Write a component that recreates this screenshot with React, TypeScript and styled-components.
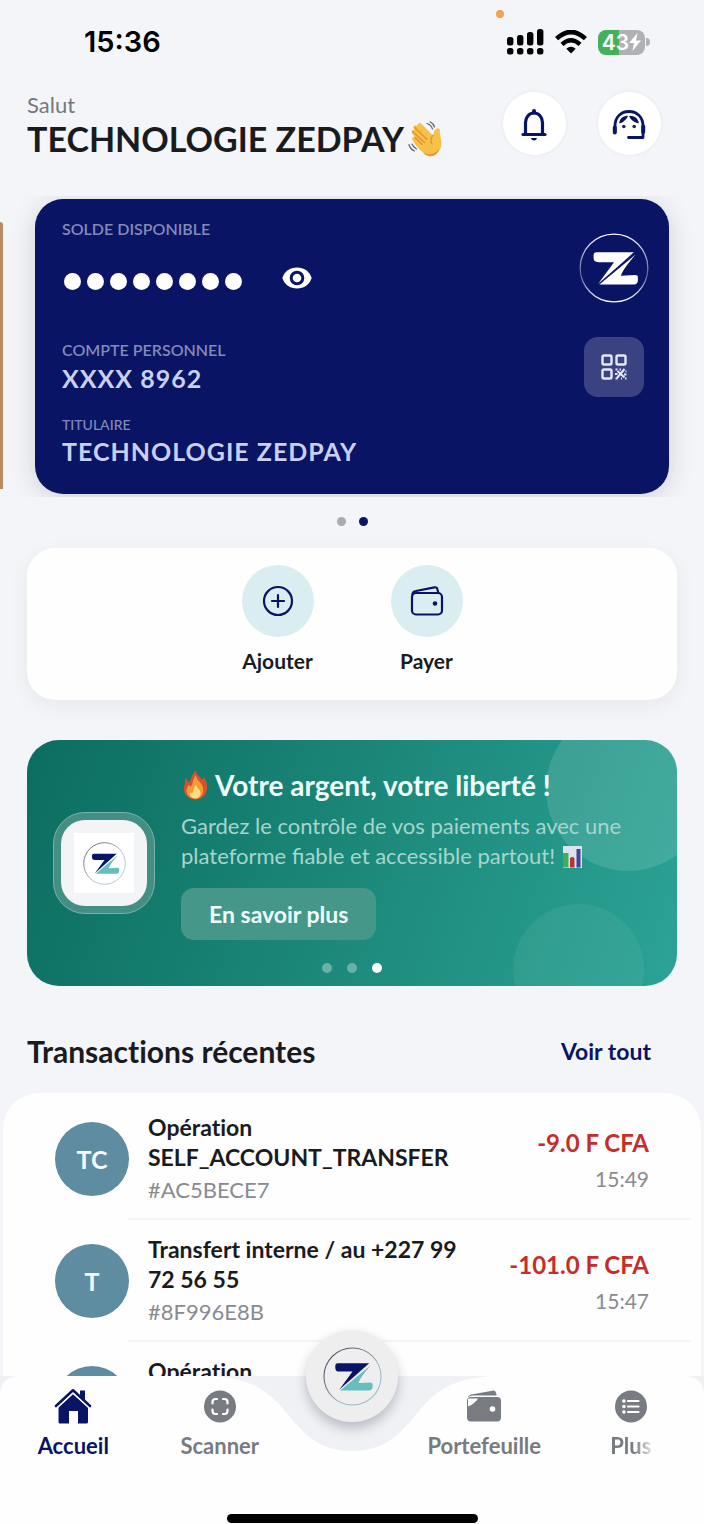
import React from "react";
import styled, { createGlobalStyle, css } from "styled-components";

const navy = "#0a1464";
const ink = "#191b1f";
const grey = "#787b82";

const GlobalStyle = createGlobalStyle`
  *, *::before, *::after { box-sizing: border-box; }
  html, body { margin: 0; padding: 0; }
  body {
    background: #f4f5f8;
    color: ${ink};
    font-family: Lato, "Liberation Sans", sans-serif;
    font-size: 22px;
  }
  button { font: inherit; color: inherit; border: 0; padding: 0; background: none; cursor: pointer; }
  a { color: inherit; text-decoration: none; }
  h1, h2, h3, p, ul { margin: 0; padding: 0; }
  h2, h3 { font-variant-ligatures: none; }
  svg { display: block; }
`;

const Screen = styled.div`
  display: flex;
  flex-direction: column;
  height: 100vh;
  overflow: hidden;
`;

const Main = styled.main`
  flex: 1;
  min-height: 0;
  overflow: hidden;
`;

/* ---------- status bar ---------- */

const StatusBar = styled.div`
  position: relative;
  display: flex;
  justify-content: space-between;
  align-items: center;
  height: 84px;
  padding: 0 54px 0 84px;
`;

const Clock = styled.time`
  font-family: Inter, "Liberation Sans", sans-serif;
  font-size: 29px;
  font-weight: 600;
  line-height: 36px;
  color: #000;
`;

const StatusIcons = styled.div`
  display: flex;
  align-items: center;
  gap: 11px;
`;

const MicDot = styled.span`
  position: absolute;
  top: 10px;
  right: 200px;
  width: 8px;
  height: 8px;
  border-radius: 50%;
  background: #f3a24f;
`;

const Battery = styled.div`
  display: flex;
  align-items: center;
  gap: 1px;
`;

const BatteryBody = styled.div`
  display: flex;
  align-items: center;
  justify-content: center;
  width: 47px;
  height: 25px;
  border-radius: 8px;
  background: linear-gradient(90deg, #43b05c 45%, #b0b1b4 45%);
  color: #fff;
  font-family: Inter, "Liberation Sans", sans-serif;
  font-size: 21px;
  font-weight: 600;
  line-height: 25px;
`;

const BatteryTip = styled.span`
  width: 4px;
  height: 8px;
  border-radius: 0 4px 4px 0;
  background: #b0b1b4;
`;

/* ---------- header ---------- */

const Header = styled.header`
  display: flex;
  justify-content: space-between;
  align-items: flex-start;
  padding: 8px 43px 37px 27px;
`;

const Greeting = styled.p`
  font-size: 22px;
  line-height: 26px;
  color: #74777d;
`;

const UserName = styled.h1`
  display: flex;
  align-items: center;
  gap: 4px;
  font-size: 34px;
  font-weight: 700;
  line-height: 41px;
  white-space: nowrap;
`;

const HeaderActions = styled.div`
  display: flex;
  gap: 32px;
`;

const RoundButton = styled.button`
  display: grid;
  place-items: center;
  width: 63px;
  height: 63px;
  padding: 2px 2px 0 0;
  border-radius: 50%;
  background: #fff;
  color: ${navy};
  box-shadow: 0 0 4px rgba(20, 30, 60, 0.06);
`;

/* ---------- account carousel ---------- */

const Carousel = styled.section`
  display: flex;
  gap: 32px;
  padding: 3px 35px 3px 0;
  overflow: hidden;
`;

const PreviousCard = styled.div`
  flex: none;
  width: 3px;
  margin: 23px 0 5px;
  border-radius: 0 3px 0 0;
  background: #b98a63;
`;

const AccountCard = styled.article`
  flex: 1;
  display: flex;
  justify-content: space-between;
  padding: 19px 20px 25px 27px;
  border-radius: 28px;
  background: ${navy};
  box-shadow: 0 4px 26px rgba(20, 30, 60, 0.16);
`;

const CardLabel = styled.p<{ $small?: boolean }>`
  font-size: ${(p) => (p.$small ? 14 : 16)}px;
  font-weight: ${(p) => (p.$small ? 500 : 600)};
  line-height: ${(p) => (p.$small ? 18 : 22)}px;
  color: #838ab8;
`;

const CardValue = styled.p`
  font-size: 25px;
  font-weight: 700;
  line-height: 35px;
  letter-spacing: 1px;
  color: #c9d0f2;
`;

const BalanceRow = styled.div`
  display: flex;
  align-items: center;
  gap: 40px;
  height: 36px;
  margin: 20px 0 43px;
  padding-left: 2px;
`;

const MaskedBalance = styled.div`
  display: flex;
  gap: 6px;
  padding-top: 6px;
`;

const MaskDot = styled.span`
  width: 17px;
  height: 17px;
  border-radius: 50%;
  background: #fff;
`;

const IconButton = styled.button`
  color: #fff;
`;

const Holder = styled.div`
  margin-top: 20px;
`;

const CardSide = styled.div`
  display: flex;
  flex-direction: column;
  align-items: center;
  gap: 34px;
  padding-top: 15px;
`;

const QrButton = styled.button`
  display: grid;
  place-items: center;
  width: 60px;
  height: 60px;
  border-radius: 14px;
  background: #3a4281;
  color: #e3e8fb;
`;

const Pager = styled.div<{ $overlay?: boolean }>`
  display: flex;
  justify-content: center;
  gap: ${(p) => (p.$overlay ? 15 : 13)}px;
  ${(p) =>
    p.$overlay
      ? css`
          position: absolute;
          left: 0;
          right: 0;
          bottom: 13px;
        `
      : css`
          padding: 20px 0 22px;
        `}
`;

const PagerDot = styled.span<{ $color: string; $size: number }>`
  width: ${(p) => p.$size}px;
  height: ${(p) => p.$size}px;
  border-radius: 50%;
  background: ${(p) => p.$color};
`;

/* ---------- quick actions ---------- */

const QuickActions = styled.section`
  display: flex;
  justify-content: center;
  gap: 77px;
  margin: 0 27px;
  padding: 17px 0 26px;
  border-radius: 28px;
  background: #fefefe;
  box-shadow: 0 6px 20px rgba(20, 30, 60, 0.06);
`;

const QuickAction = styled.button`
  display: flex;
  flex-direction: column;
  align-items: center;
  gap: 11px;
  width: 72px;
  font-size: 21px;
  font-weight: 700;
  line-height: 26px;
`;

const ActionCircle = styled.span`
  display: grid;
  place-items: center;
  width: 72px;
  height: 72px;
  border-radius: 50%;
  background: #daedf1;
  color: ${navy};
`;

/* ---------- promo banner ---------- */

const Banner = styled.section`
  position: relative;
  display: flex;
  align-items: center;
  gap: 26px;
  margin: 40px 27px 0;
  padding-left: 26px;
  border-radius: 32px;
  overflow: hidden;
  background: linear-gradient(110deg, #0b6d5f 0%, #1a8577 45%, #2ba396 100%);
`;

const Bubble = styled.span<{ $size: number; $x: number; $y: number; $alpha: number }>`
  position: absolute;
  right: ${(p) => p.$x}px;
  top: ${(p) => p.$y}px;
  width: ${(p) => p.$size}px;
  height: ${(p) => p.$size}px;
  border-radius: 50%;
  background: rgba(255, 255, 255, ${(p) => p.$alpha});
`;

const LogoFrame = styled.div`
  flex: none;
  padding: 7px;
  border: 1px solid #7ab3a9;
  border-radius: 32px;
  background: #448f83;
`;

const LogoTile = styled.div`
  display: grid;
  place-items: center;
  width: 86px;
  height: 86px;
  border-radius: 24px;
  background: #f2f4f6;
`;

const LogoPaper = styled.div`
  display: grid;
  place-items: center;
  width: 60px;
  height: 60px;
  background: #fff;
`;

const BannerText = styled.div`
  position: relative;
  padding: 27px 0 46px;
`;

const BannerTitle = styled.h2`
  display: flex;
  align-items: center;
  gap: 6px;
  font-size: 28px;
  font-weight: 700;
  line-height: 36px;
  color: #f0fffd;
`;

const BannerCopy = styled.p`
  margin: 8px 0 17px;
  max-width: 450px;
  font-size: 22px;
  line-height: 30px;
  color: #a5d6cd;

  svg {
    display: inline-block;
    margin-left: 8px;
    vertical-align: -4px;
  }
`;

const BannerButton = styled.button`
  height: 52px;
  padding: 0 28px;
  border-radius: 13px;
  background: #45978a;
  color: #f0fffd;
  font-size: 23px;
  font-weight: 700;
`;

/* ---------- transactions ---------- */

const SectionHead = styled.div`
  display: flex;
  justify-content: space-between;
  align-items: center;
  padding: 45px 53px 22px 27px;
`;

const SectionTitle = styled.h2`
  font-size: 30px;
  font-weight: 700;
  line-height: 40px;
`;

const SeeAll = styled.a`
  font-size: 23px;
  font-weight: 700;
  color: ${navy};
`;

const TransactionList = styled.ul`
  margin: 0 3px;
  padding: 5px 0 0;
  border-radius: 36px 36px 0 0;
  background: #fefefe;
  list-style: none;
`;

const Transaction = styled.li`
  position: relative;
  display: flex;
  align-items: center;
  gap: 19px;
  min-height: 122px;
  padding: 0 52px;

  &::after {
    content: "";
    position: absolute;
    left: 125px;
    right: 10px;
    bottom: 0;
    height: 2px;
    background: #f5f5f6;
  }
`;

const Avatar = styled.span`
  flex: none;
  display: grid;
  place-items: center;
  width: 74px;
  height: 74px;
  border-radius: 50%;
  background: #5e8da1;
  color: #f3fbfd;
  font-size: 25px;
  font-weight: 700;
`;

const TransactionInfo = styled.div`
  flex: 1;
  max-width: 332px;
  min-height: 94px;
`;

const TransactionTitle = styled.h3`
  font-size: 23px;
  font-weight: 700;
  line-height: 30px;
`;

const Reference = styled.p`
  margin-top: 4px;
  font-size: 22px;
  line-height: 28px;
  color: #898b90;
`;

const TransactionSide = styled.div`
  margin-left: auto;
  padding-top: 2px;
  text-align: right;
  white-space: nowrap;
`;

const Amount = styled.p`
  font-size: 24px;
  font-weight: 700;
  line-height: 38px;
  color: #c62d2a;
`;

const Hour = styled.p`
  font-size: 21px;
  line-height: 34px;
  color: #898b90;
`;

/* ---------- bottom navigation ---------- */

const Nav = styled.nav`
  position: relative;
  flex: none;
  background: #f0f1f5;
`;

const NavPanel = styled.div`
  position: relative;
  padding-bottom: 1px;
  border-radius: 18px 18px 0 0;
  background: #fefefe;
`;

const NavGrid = styled.div`
  position: relative;
  display: grid;
  grid-template-columns: 1fr 1fr 118px 1fr 1fr;
  padding: 12px 0 55px;
`;

const NavItem = styled.a<{ $active?: boolean }>`
  display: flex;
  flex-direction: column;
  align-items: center;
  gap: 9px;
  color: ${(p) => (p.$active ? navy : grey)};
`;

const NavLabel = styled.span<{ $fade?: boolean }>`
  font-size: 22px;
  font-weight: 700;
  line-height: 26px;
  ${(p) => p.$fade && "mask-image: linear-gradient(90deg, #000 60%, transparent 112%);"}
`;

const Notch = styled.svg`
  position: absolute;
  top: 0;
  left: 50%;
  transform: translateX(-50%);
`;

const Fab = styled.button`
  position: absolute;
  top: -46px;
  left: 50%;
  display: grid;
  place-items: center;
  width: 92px;
  height: 92px;
  border-radius: 50%;
  background: #eeeeef;
  box-shadow: 0 6px 12px rgba(30, 35, 60, 0.26);
  transform: translateX(-50%);
`;

const HomeBar = styled.div`
  width: 251px;
  height: 9px;
  margin: 0 auto;
  border-radius: 5px;
  background: #000;
`;

/* ---------- drawings ---------- */

function ZLogo({ size, mono, id }: { size: number; mono?: boolean; id: string }) {
  const ring = mono ? ["#ffffff", "#5a629c", "#ffffff"] : ["#23283f", "#aab4c4", "#8ec5cc"];
  return (
    <svg width={size} height={size} viewBox="0 0 60 60" aria-hidden="true">
      <defs>
        <linearGradient id={id} x1="0" y1="0" x2={mono ? "0" : "1"} y2="1">
          <stop offset="0" stopColor={ring[0]} />
          <stop offset="0.6" stopColor={ring[1]} />
          <stop offset="1" stopColor={ring[2]} />
        </linearGradient>
      </defs>
      <circle cx="30" cy="30" r="29" fill="none" stroke={`url(#${id})`} strokeWidth="1.1" />
      <path
        d="M15 16.5H47L37 25.5 16.5 43.5 30 25H16.5Q12.5 25 12.5 21V19Q12.5 16.5 15 16.5Z"
        fill={mono ? "#fff" : navy}
      />
      <path
        d="M48.5 18.5 17.5 44.2H47Q50.5 44 50.5 40V38Q50.5 36 48 36L36 36.6Q37 32 48.5 18.5Z"
        fill={mono ? "#fff" : "#66bfbd"}
      />
    </svg>
  );
}

const SignalIcon = () => (
  <svg width="37" height="26" viewBox="0 0 37 26" fill="#000" aria-hidden="true">
    <rect x="0" y="8" width="6.400" height="8.500" rx="2.500" />
    <rect x="10" y="6" width="6.400" height="10.500" rx="2.500" />
    <rect x="20" y="3" width="6.400" height="13.500" rx="2.500" />
    <rect x="30" y="0" width="6.400" height="16.500" rx="2.500" />
    <rect x="0" y="19" width="6.400" height="6.500" rx="2.500" />
    <rect x="10" y="19" width="6.400" height="6.500" rx="2.500" />
    <rect x="20" y="19" width="6.400" height="6.500" rx="2.500" />
    <rect x="30" y="19" width="6.400" height="6.500" rx="2.500" />
  </svg>
);

const WifiIcon = () => (
  <svg width="32" height="24" viewBox="0 0 32 24" fill="none" stroke="#000" aria-hidden="true">
    <path d="M1.6 8.6Q16-4.6 30.4 8.6" strokeWidth="4.6" />
    <path d="M7 14.4Q16 6.2 25 14.4" strokeWidth="4.4" />
    <path d="M16 23.5 11.3 18.8Q16 14.6 20.7 18.8Z" fill="#000" stroke="none" />
  </svg>
);

const WaveHand = () => (
  <svg width="36" height="36" viewBox="0 0 36 36" aria-label="main qui salue" role="img">
    <path
      d="M15 31.5C10 28 4.5 19.500 4 17.500Q4.500 15.500 6.800 16.500L3.800 11.500Q3.500 8.600 6.500 9L5.500 6Q6.500 3.200 9.300 4.800L9.600 3Q11.500.800 13.600 3L25 14.500 26 10.500Q27.500 6.600 31.200 7.600 32.400 8.800 31.800 12C33 18 35 25 31 30 27 35.500 20 35.500 15 31.500Z"
      fill="#f7c148"
    />
    <path
      d="M15 31.500C20 34.500 27 34 31 28 30.500 32 26 35.800 21.500 35.200 18 34.500 16 33 15 31.500Z"
      fill="#e88f2a"
    />
    <path d="M7 16.500 14 23.500M4.500 10.500 16.500 21.500M6.500 6.500 19 18.500M24.800 14.500Q21.500 19 24 23" fill="none" stroke="#de9230" strokeWidth="1.300" strokeLinecap="round" />
    <path d="M19 2.500Q23 3.500 24.500 8M22 .800Q25.500 2.500 26.500 6M1 23.500Q2 28 6.500 30M4 23Q5 26 8.500 28" fill="none" stroke="#5f6468" strokeWidth="1.200" strokeLinecap="round" />
  </svg>
);

const FireIcon = () => (
  <svg width="28" height="30" viewBox="0 0 28 30" aria-label="feu" role="img">
    <path
      d="M15 .5C15.500 5 19 6.500 21 9.500 22.500 8.500 22.500 7 22 6 25.500 10 26.500 15 26 19 25.500 25.500 20.500 29.500 14.500 29.500 8 29.500 3.300 25.500 3 19.500 2.800 15.500 5 12.500 4 8 6.500 9 7.500 11 7.700 13 10.500 10.500 9.500 5 15 .5Z"
      fill="#d9502f"
    />
    <path d="M15 5C15 10 20 12 21.500 16 24 23 20 28.500 14.500 28.500 8 28.500 5 24 5.500 19.500 6.500 18 7 16.500 7.500 15 9 15.500 9 16.500 9.500 17 12.500 14 11 10 15 5Z" fill="#f49a35" />
    <path d="M15 14.500C15.500 18 19.500 19 19.500 23 19.500 26.500 17.500 28.500 14.500 28.500 10.500 28.500 8.500 26 9 22.500 10 22.500 10.500 23 11 23.500 13 21 12.500 18 15 14.500Z" fill="#fbdc83" />
  </svg>
);

const ChartIcon = () => (
  <svg width="19" height="22" viewBox="0 0 19 22" aria-label="graphique" role="img">
    <path d="M0 0H19V22H0Z" fill="#dde3ee" />
    <path d="M0 7H5.500V21.500H0Z" fill="#3fb056" />
    <path d="M7 21.500V12.500Q9.250 9 11.500 12.500V21.500Z" fill="#b83236" />
    <path d="M13.500 3H17.500V21.500H13.500Z" fill="#42439a" />
  </svg>
);

const BellIcon = () => (
  <svg width="26" height="32" viewBox="0 0 26 32" fill="none" stroke="currentColor" strokeWidth="3.200" strokeLinecap="round" strokeLinejoin="round" aria-hidden="true">
    <path d="M4.500 25V13.500A8.500 9.500 0 0 1 21.500 13.500V25" />
    <path d="M2 25.500H24" />
    <path d="M13 2V3.500" strokeWidth="4" />
    <path d="M10 29H16Q15.500 31.500 13 31.500 10.500 31.500 10 29Z" fill="currentColor" stroke="none" />
  </svg>
);

const SupportIcon = () => (
  <svg width="34" height="32" viewBox="0 0 34 32" fill="none" stroke="currentColor" strokeLinecap="round" strokeLinejoin="round" aria-hidden="true">
    <path d="M3 23V17C3 8 9 2.500 17 2.500S31 8 31 17V28.500H16.500" strokeWidth="2.800" />
    <path d="M2.800 18.500V23.500M31.200 17.500V23" strokeWidth="4" />
    <path d="M8 13.500C11 12.500 13 10.500 15 7.500 10.500 8 8.500 11 8 13.500ZM18 7.500C19.500 10.500 22 12.500 26 13.500 25 9.500 22 7.500 18 7.500Z" fill="currentColor" strokeWidth="1.600" />
    <circle cx="11.800" cy="17.500" r="1.800" fill="#222640" stroke="none" />
    <circle cx="22.200" cy="17.500" r="1.800" fill="#222640" stroke="none" />
  </svg>
);

const EyeIcon = () => (
  <svg width="30" height="22" viewBox="0 0 30 22" aria-hidden="true">
    <path d="M15 .5C22 .5 27.500 4.500 29.700 11 27.500 17.500 22 21.500 15 21.500S2.500 17.500.3 11C2.500 4.500 8 .5 15 .5Z" fill="#fff" />
    <circle cx="15" cy="11" r="5.800" fill="#fff" stroke={navy} strokeWidth="3" />
  </svg>
);

const QrIcon = () => (
  <svg width="26" height="26" viewBox="0 0 26 26" fill="none" stroke="currentColor" strokeWidth="2.400" aria-hidden="true">
    <rect x="1.500" y="1.500" width="9" height="9" rx="1.500" />
    <rect x="15.500" y="1.500" width="9" height="9" rx="1.500" />
    <rect x="1.500" y="15.500" width="9" height="9" rx="1.500" />
    <path d="M14.500 15.500H16.500M16.500 17 23.500 23.500M23.500 15 16 24M24.500 17.500H25.500M14 20H16.500M18.500 15.500H20M23 20.500H25.500M20 24.500H21M24 24.500H25.500M14.500 24.500H16.500" strokeWidth="2" />
  </svg>
);

const AddIcon = () => (
  <svg width="32" height="32" viewBox="0 0 32 32" fill="none" stroke="currentColor" strokeWidth="2.200" strokeLinecap="round" aria-hidden="true">
    <circle cx="16" cy="16" r="14" />
    <path d="M16 10V22M10 16H22" />
  </svg>
);

const PayIcon = () => (
  <svg width="34" height="32" viewBox="0 0 34 32" fill="none" stroke="currentColor" strokeWidth="2.200" strokeLinejoin="round" aria-hidden="true">
    <rect x="2" y="8" width="30" height="21.500" rx="4" />
    <path d="M2.500 10.500Q2 6.500 6 6L24.500 2.300Q27 2 27.500 4.500L28.300 8" />
    <circle cx="25" cy="18.500" r="2.300" fill="currentColor" stroke="none" />
  </svg>
);

const HomeIcon = () => (
  <svg width="38" height="36" viewBox="0 0 38 36" fill="currentColor" aria-hidden="true">
    <path d="M26 2.500H31V13L26 8.500Z" />
    <path d="M2 18 19 2.300 36 18" fill="none" stroke="currentColor" strokeWidth="2.600" strokeLinecap="round" strokeLinejoin="round" />
    <path d="M4.500 19.500 19 6.200 34 19.500V34Q34 35.500 32.500 35.500H24V23H15V35.500H6Q4.500 35.500 4.500 34Z" />
    <path d="M3.500 19.500 19 5.200 34.500 19.500" fill="none" stroke="#fefefe" strokeWidth="1.100" />
  </svg>
);

const ScanIcon = () => (
  <svg width="36" height="36" viewBox="0 0 36 36" aria-hidden="true">
    <circle cx="18" cy="18.500" r="16" fill="currentColor" />
    <path d="M10.500 15.500V14Q10.500 11 13.500 11H15M21 11H22.500Q25.500 11 25.500 14V15.500M25.500 21.500V23Q25.500 26 22.500 26H21M15 26H13.500Q10.500 26 10.500 23V21.500" fill="none" stroke="#fff" strokeWidth="2.200" strokeLinecap="round" />
  </svg>
);

const WalletIcon = () => (
  <svg width="36" height="36" viewBox="0 0 36 36" aria-hidden="true">
    <path d="M2 9.500Q2 7.500 5 6.500L26.500 2.700Q29.500 2.200 30 5L30.800 7.500H7Q4 7.500 2 9.500Z" fill="currentColor" />
    <path d="M1 13Q1 9 5 9H31Q35 9 35 13V29.500Q35 33.500 31 33.500H5Q1 33.500 1 29.500Z" fill="currentColor" />
    <path d="M2 10.500H12Q9 15.500 2 18.500Z" fill="#fff" />
    <circle cx="26.500" cy="21" r="2.800" fill="#fff" />
  </svg>
);

const MoreIcon = () => (
  <svg width="36" height="36" viewBox="0 0 36 36" aria-hidden="true">
    <circle cx="18" cy="18.500" r="16" fill="currentColor" />
    <path d="M15 13H25.500M15 18.500H25.500M15 24H25.500" stroke="#fff" strokeWidth="2.200" strokeLinecap="round" />
    <path d="M10.800 13H11M10.800 18.500H11M10.800 24H11" stroke="#fff" strokeWidth="3.400" strokeLinecap="round" />
  </svg>
);

/* ---------- data ---------- */

const transactions = [
  { initials: "TC", title: "Opération SELF_ACCOUNT_TRANSFER", reference: "#AC5BECE7", amount: "-9.0 F CFA", hour: "15:49" },
  { initials: "T", title: "Transfert interne / au +227 99 72 56 55", reference: "#8F996E8B", amount: "-101.0 F CFA", hour: "15:47" },
  { initials: "", title: "Opération", reference: "", amount: "", hour: "" },
];

export default function App() {
  return (
    <>
      <GlobalStyle />
      <Screen>
        <Main>
          <StatusBar>
            <Clock>15:36</Clock>
            <MicDot />
            <StatusIcons>
              <SignalIcon />
              <WifiIcon />
              <Battery>
                <BatteryBody>
                  43
                  <svg width="12" height="18" viewBox="0 0 12 18" aria-hidden="true">
                    <path d="M8.500 0 0 10H5L3.500 18 12 7.500H7Z" fill="#fff" />
                  </svg>
                </BatteryBody>
                <BatteryTip />
              </Battery>
            </StatusIcons>
          </StatusBar>

          <Header>
            <div>
              <Greeting>Salut</Greeting>
              <UserName>
                TECHNOLOGIE ZEDPAY <WaveHand />
              </UserName>
            </div>
            <HeaderActions>
              <RoundButton aria-label="Notifications">
                <BellIcon />
              </RoundButton>
              <RoundButton aria-label="Assistance">
                <SupportIcon />
              </RoundButton>
            </HeaderActions>
          </Header>

          <Carousel>
            <PreviousCard />
            <AccountCard>
              <div>
                <CardLabel>SOLDE DISPONIBLE</CardLabel>
                <BalanceRow>
                  <MaskedBalance>
                    {Array.from({ length: 8 }, (_, i) => (
                      <MaskDot key={i} />
                    ))}
                  </MaskedBalance>
                  <IconButton aria-label="Afficher le solde">
                    <EyeIcon />
                  </IconButton>
                </BalanceRow>
                <CardLabel>COMPTE PERSONNEL</CardLabel>
                <CardValue>XXXX 8962</CardValue>
                <Holder>
                  <CardLabel $small>TITULAIRE</CardLabel>
                  <CardValue>TECHNOLOGIE ZEDPAY</CardValue>
                </Holder>
              </div>
              <CardSide>
                <ZLogo size={70} mono id="ring-card" />
                <QrButton aria-label="Code QR">
                  <QrIcon />
                </QrButton>
              </CardSide>
            </AccountCard>
          </Carousel>

          <Pager>
            <PagerDot $color="#a9abaf" $size={9} />
            <PagerDot $color={navy} $size={9} />
          </Pager>

          <QuickActions>
            <QuickAction>
              <ActionCircle>
                <AddIcon />
              </ActionCircle>
              Ajouter
            </QuickAction>
            <QuickAction>
              <ActionCircle>
                <PayIcon />
              </ActionCircle>
              Payer
            </QuickAction>
          </QuickActions>

          <Banner>
            <Bubble $size={164} $x={-33} $y={-33} $alpha={0.12} />
            <Bubble $size={131} $x={33} $y={164} $alpha={0.06} />
            <LogoFrame>
              <LogoTile>
                <LogoPaper>
                  <ZLogo size={43} id="ring-banner" />
                </LogoPaper>
              </LogoTile>
            </LogoFrame>
            <BannerText>
              <BannerTitle>
                <FireIcon /> Votre argent, votre liberté !
              </BannerTitle>
              <BannerCopy>
                Gardez le contrôle de vos paiements avec une plateforme fiable et accessible partout!
                <ChartIcon />
              </BannerCopy>
              <BannerButton>En savoir plus</BannerButton>
            </BannerText>
            <Pager $overlay>
              <PagerDot $color="#6bb1a7" $size={10} />
              <PagerDot $color="#6bb1a7" $size={10} />
              <PagerDot $color="#fff" $size={10} />
            </Pager>
          </Banner>

          <SectionHead>
            <SectionTitle>Transactions récentes</SectionTitle>
            <SeeAll href="#transactions">Voir tout</SeeAll>
          </SectionHead>

          <TransactionList>
            {transactions.map((t, i) => (
              <Transaction key={i}>
                <Avatar>{t.initials}</Avatar>
                <TransactionInfo>
                  <TransactionTitle>{t.title}</TransactionTitle>
                  <Reference>{t.reference}</Reference>
                </TransactionInfo>
                <TransactionSide>
                  <Amount>{t.amount}</Amount>
                  <Hour>{t.hour}</Hour>
                </TransactionSide>
              </Transaction>
            ))}
          </TransactionList>
        </Main>

        <Nav>
          <NavPanel>
            <Notch width="280" height="75" viewBox="0 0 280 75" aria-hidden="true">
              <path
                d="M0 0C36 2 54 14 67 28 84 46 98 75 140 75S196 46 213 28C226 14 244 2 280 0Z"
                fill="#f0f1f5"
              />
            </Notch>
            <NavGrid>
              <NavItem href="#accueil" $active>
                <HomeIcon />
                <NavLabel>Accueil</NavLabel>
              </NavItem>
              <NavItem href="#scanner">
                <ScanIcon />
                <NavLabel>Scanner</NavLabel>
              </NavItem>
              <span />
              <NavItem href="#portefeuille">
                <WalletIcon />
                <NavLabel>Portefeuille</NavLabel>
              </NavItem>
              <NavItem href="#plus">
                <MoreIcon />
                <NavLabel $fade>Plus</NavLabel>
              </NavItem>
            </NavGrid>
            <HomeBar />
          </NavPanel>
          <Fab aria-label="ZedPay">
            <ZLogo size={59} id="ring-fab" />
          </Fab>
        </Nav>
      </Screen>
    </>
  );
}
